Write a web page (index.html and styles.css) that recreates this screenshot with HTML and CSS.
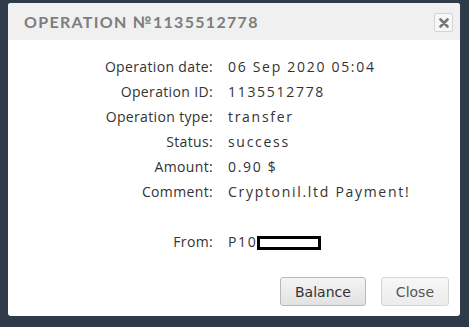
FILE: index.html
```html
<!DOCTYPE html>
<html>
<head>
<meta charset="utf-8">
<link rel="stylesheet" href="styles.css">
</head>
<body>
<div class="dialog">
  <div class="header">
    <div class="title">OPERATION №1135512778</div>
    <button class="x" aria-label="close">
      <svg width="10" height="10" viewBox="0 0 10 10"><path d="M1.5 1.5L8.5 8.5M8.5 1.5L1.5 8.5" stroke="#777" stroke-width="2.6" stroke-linecap="round"/></svg>
    </button>
  </div>
  <div class="body">
    <div class="rows">
      <div class="label">Operation date:</div><div class="value">06 Sep 2020 05:04</div>
      <div class="label">Operation ID:</div><div class="value">1135512778</div>
      <div class="label">Operation type:</div><div class="value">transfer</div>
      <div class="label">Status:</div><div class="value">success</div>
      <div class="label">Amount:</div><div class="value">0.90 $</div>
      <div class="label">Comment:</div><div class="value">Cryptonil.ltd Payment!</div>
      <div class="label spacer">From:</div><div class="value spacer">P10<span class="redact"></span></div>
    </div>
  </div>
  <div class="footer">
    <button class="btn">Balance</button>
    <button class="btn light">Close</button>
  </div>
</div>
</body>
</html>
```
FILE: styles.css
```css
html, body { margin: 0; padding: 0; }
body {
  background: #2f3b48;
  width: 469px;
  height: 327px;
  overflow: hidden;
  padding: 3px 0 0 8px;
  box-sizing: border-box;
}
.dialog {
  width: 452px;
  height: 313px;
  background: #fff;
  border-radius: 3px;
  display: flex;
  flex-direction: column;
  overflow: hidden;
}
.header {
  height: 37px;
  background: #f0f0f0;
  display: flex;
  align-items: center;
  justify-content: space-between;
  padding: 0 7px 0 16px;
}
.title {
  font-family: "Lato", sans-serif;
  font-weight: 700;
  font-size: 16px;
  letter-spacing: 1.3px;
  color: #7d7d7d;
}
.x {
  width: 19px;
  height: 19px;
  border: 1px solid #d4d4d4;
  border-radius: 2px;
  background: #f7f7f7;
  padding: 0;
  display: flex;
  align-items: center;
  justify-content: center;
  margin-top: 2px;
}
.body {
  flex: 1;
  padding-top: 17px;
}
.rows {
  display: grid;
  grid-template-columns: 205px auto;
  column-gap: 15px;
  row-gap: 6px;
  font-family: "Open Sans", sans-serif;
  font-size: 14px;
  color: #333;
  line-height: 19px;
}
.label { text-align: right; letter-spacing: 0.35px; }
.value { letter-spacing: 1.7px; }
.spacer { margin-top: 25px; }
.redact {
  display: inline-block;
  width: 58px;
  height: 8px;
  border: 3px solid #000;
  background: #fff;
  vertical-align: -3px;
  margin-left: -1px;
}
.footer {
  display: flex;
  justify-content: flex-end;
  gap: 15px;
  padding: 0 11px 10px 0;
}
.btn {
  font-family: "DejaVu Sans", sans-serif;
  font-size: 14px;
  color: #333;
  height: 29px;
  padding: 0 14px;
  border: 1px solid #b8b8b8;
  border-radius: 3px;
  background: linear-gradient(#f4f4f4, #e2e2e2);
}
.btn.light {
  color: #555;
  border-color: #d4d4d4;
  background: linear-gradient(#f7f7f7, #ececec);
}
```
